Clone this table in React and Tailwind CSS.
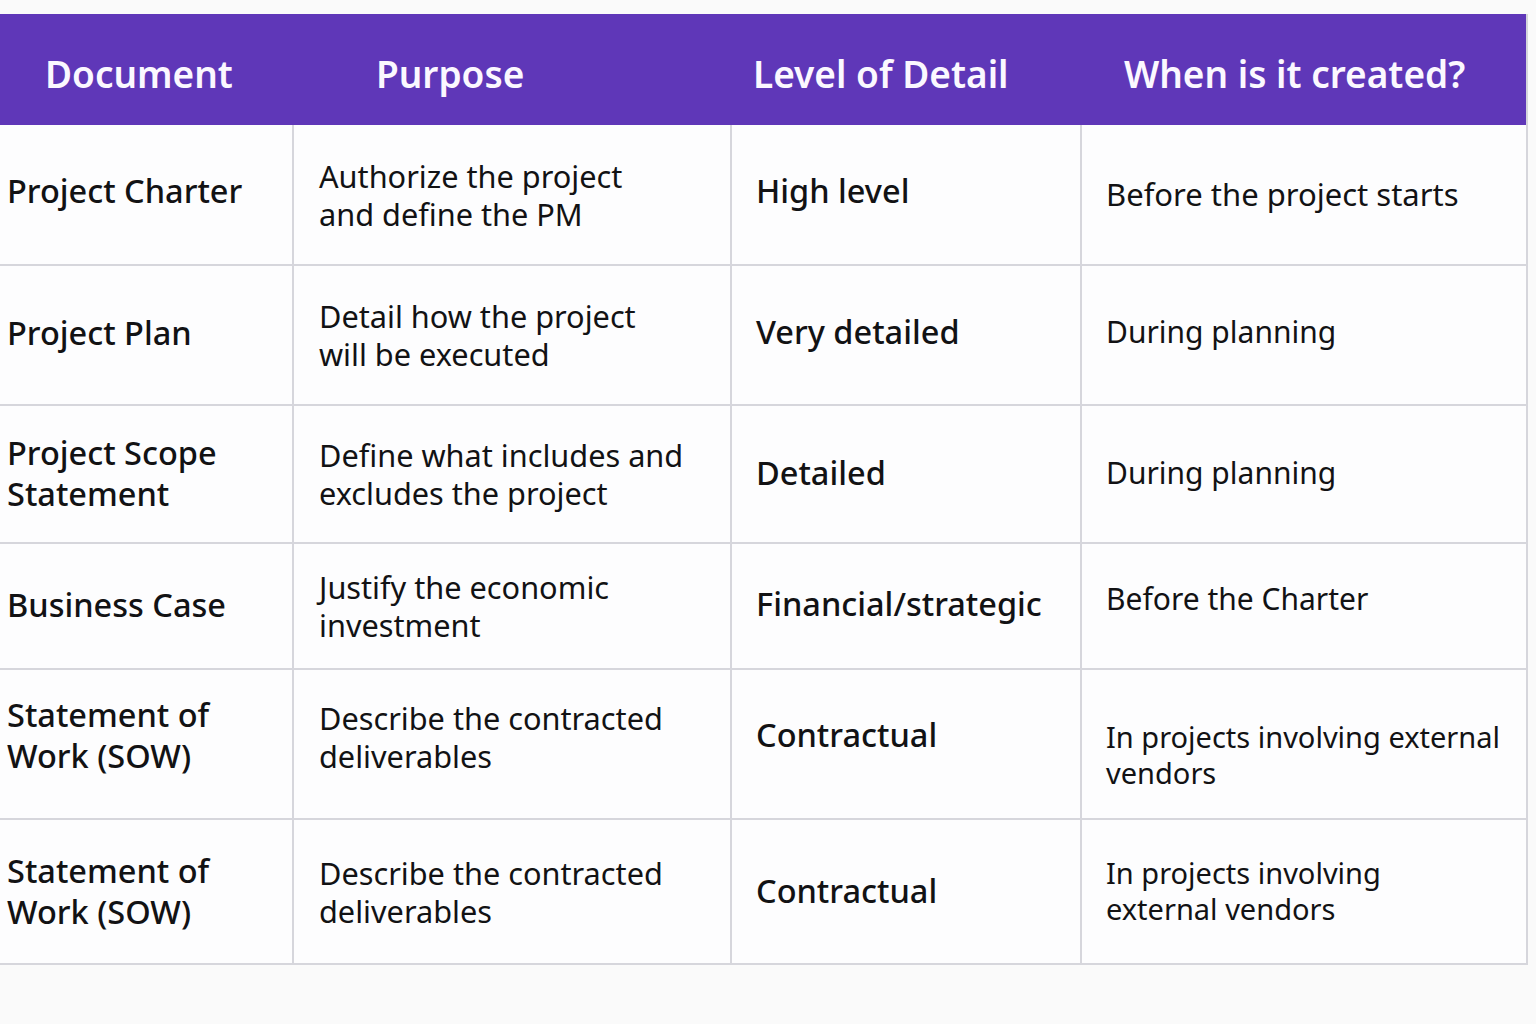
import React from "react";

const rows = [
  {
    doc: "Project Charter",
    purpose: "Authorize the project\nand define the PM",
    level: "High level",
    when: "Before the project starts",
    h: "h-[139px]",
    whenSize: "text-[31px]",
    docPad: "pb-[8px]",
    whenPad: "pb-[2px]",
  },
  {
    doc: "Project Plan",
    purpose: "Detail how the project\nwill be executed",
    level: "Very detailed",
    when: "During planning",
    h: "h-[140px]",
    whenSize: "text-[30px]",
    docPad: "pb-[6px]",
    whenPad: "pb-[6px]",
  },
  {
    doc: "Project Scope\nStatement",
    purpose: "Define what includes and\nexcludes the project",
    level: "Detailed",
    when: "During planning",
    h: "h-[138px]",
    whenSize: "text-[30px]",
    docPad: "pb-[2px]",
    whenPad: "pb-[2px]",
  },
  {
    doc: "Business Case",
    purpose: "Justify the economic\ninvestment",
    level: "Financial/strategic",
    when: "Before the Charter",
    h: "h-[126px]",
    whenSize: "text-[30px]",
    docPad: "pb-[4px]",
    whenPad: "pb-[14px]",
  },
  {
    doc: "Statement of\nWork (SOW)",
    purpose: "Describe the contracted\ndeliverables",
    level: "Contractual",
    when: "In projects involving external\nvendors",
    h: "h-[150px]",
    whenSize: "text-[29px]",
    docPad: "pb-[18px]",
    whenPad: "pt-[22px]",
  },
  {
    doc: "Statement of\nWork (SOW)",
    purpose: "Describe the contracted\ndeliverables",
    level: "Contractual",
    when: "In projects involving\nexternal vendors",
    h: "h-[145px]",
    whenSize: "text-[29px]",
    docPad: "pb-[2px]",
    whenPad: "pb-[2px]",
  },
];

function Lines({ text }) {
  return text.split("\n").map((line, i) => <div key={i}>{line}</div>);
}

export default function App() {
  return (
    <div
      className="min-h-[1024px] w-[1536px] bg-[#fafafa] pt-[14px]"
      style={{ fontFamily: '"Noto Sans", "Open Sans", sans-serif' }}
    >
      <div className="w-[1528px] border-r-2 border-b-2 border-[#d6d6dc] bg-[#fdfdfe]">
        {/* header */}
        <div className="grid h-[111px] grid-cols-[292px_438px_350px_446px] items-center bg-[#5f37b8] pt-[9px] text-[37px] font-semibold text-[#fbf8ff]">
          <div className="pl-[45px]">Document</div>
          <div className="pl-[84px]">Purpose</div>
          <div className="pl-[23px]">Level of Detail</div>
          <div className="pl-[44px]">When is it created?</div>
        </div>

        {rows.map((r, i) => (
          <div
            key={i}
            className={`grid grid-cols-[292px_438px_350px_446px] ${r.h} ${
              i > 0 ? "border-t-2 border-[#d6d6dc]" : ""
            } text-[#121214]`}
          >
            <div
              className={`flex items-center pl-[7px] text-[32.5px] font-medium leading-[41px] ${r.docPad}`}
            >
              <div>
                <Lines text={r.doc} />
              </div>
            </div>
            <div
              className={`flex items-center border-l-2 border-[#d6d6dc] pl-[25px] text-[30.7px] leading-[38px] ${
                i === 4 ? "pb-[14px]" : ""
              }`}
            >
              <div>
                <Lines text={r.purpose} />
              </div>
            </div>
            <div
              className={`flex items-center border-l-2 border-[#d6d6dc] pl-[24px] text-[32.5px] font-medium leading-[38px] ${r.docPad}`}
            >
              <div>{r.level}</div>
            </div>
            <div
              className={`flex items-center border-l-2 border-[#d6d6dc] pl-[24px] leading-[36px] ${r.whenSize} ${r.whenPad}`}
            >
              <div>
                <Lines text={r.when} />
              </div>
            </div>
          </div>
        ))}
      </div>
    </div>
  );
}
